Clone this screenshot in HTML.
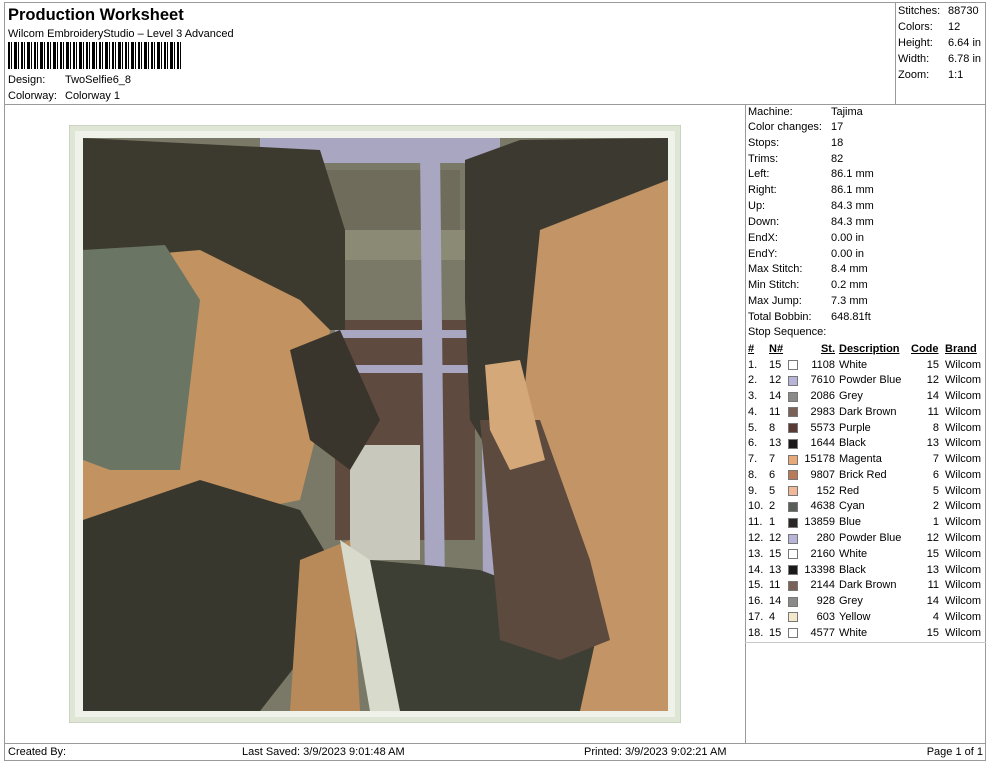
<!DOCTYPE html>
<html><head><meta charset="utf-8"><style>
*{margin:0;padding:0;box-sizing:border-box}
body{width:990px;height:762px;background:#fff;font-family:"Liberation Sans",Arial,sans-serif;font-size:11px;color:#000;position:relative;overflow:hidden}
.a{position:absolute;white-space:nowrap;line-height:13px}
.ln{position:absolute;background:#9a9a9a}
.r{text-align:right}
.sw{position:absolute;width:10px;height:10px;border:1px solid #777}
u{text-decoration:underline;font-weight:bold}
</style></head><body>
<!-- borders -->
<div class="ln" style="left:4px;top:2px;width:982px;height:1px"></div>
<div class="ln" style="left:4px;top:2px;width:1px;height:759px"></div>
<div class="ln" style="left:985px;top:2px;width:1px;height:759px"></div>
<div class="ln" style="left:4px;top:104px;width:982px;height:1px"></div>
<div class="ln" style="left:895px;top:2px;width:1px;height:102px"></div>
<div class="ln" style="left:745px;top:104px;width:1px;height:639px"></div>
<div class="ln" style="left:745px;top:642px;width:241px;height:1px;background:#c8c8c8"></div>
<div class="ln" style="left:4px;top:743px;width:982px;height:1px"></div>
<div class="ln" style="left:4px;top:760px;width:982px;height:1px"></div>

<div class="a" style="left:8px;top:6px;font-size:16.5px;font-weight:bold;line-height:19px">Production Worksheet</div>
<div class="a" style="left:8px;top:28px">Wilcom EmbroideryStudio – Level 3 Advanced</div>
<div class="a" style="left:8px;top:42px;width:175px;height:27px;background:repeating-linear-gradient(90deg,#000 0 2px,#fff 2px 3px,#000 3px 4px,#fff 4px 6px,#000 6px 9px,#fff 9px 10px,#000 10px 11px,#fff 11px 13px)"></div>
<div class="a" style="left:8px;top:74px">Design:</div><div class="a" style="left:65px;top:74px">TwoSelfie6_8</div>
<div class="a" style="left:8px;top:90px">Colorway:</div><div class="a" style="left:65px;top:90px">Colorway 1</div>

<div class="a" style="left:898px;top:5px">Stitches:</div><div class="a" style="left:948px;top:5px">88730</div>
<div class="a" style="left:898px;top:21px">Colors:</div><div class="a" style="left:948px;top:21px">12</div>
<div class="a" style="left:898px;top:37px">Height:</div><div class="a" style="left:948px;top:37px">6.64 in</div>
<div class="a" style="left:898px;top:53px">Width:</div><div class="a" style="left:948px;top:53px">6.78 in</div>
<div class="a" style="left:898px;top:69px">Zoom:</div><div class="a" style="left:948px;top:69px">1:1</div>

<!-- right info -->
<div class="a" style="left:748px;top:106px">Machine:</div><div class="a" style="left:831px;top:106px">Tajima</div>
<div class="a" style="left:748px;top:121px">Color changes:</div><div class="a" style="left:831px;top:121px">17</div>
<div class="a" style="left:748px;top:137px">Stops:</div><div class="a" style="left:831px;top:137px">18</div>
<div class="a" style="left:748px;top:153px">Trims:</div><div class="a" style="left:831px;top:153px">82</div>
<div class="a" style="left:748px;top:168px">Left:</div><div class="a" style="left:831px;top:168px">86.1 mm</div>
<div class="a" style="left:748px;top:184px">Right:</div><div class="a" style="left:831px;top:184px">86.1 mm</div>
<div class="a" style="left:748px;top:200px">Up:</div><div class="a" style="left:831px;top:200px">84.3 mm</div>
<div class="a" style="left:748px;top:216px">Down:</div><div class="a" style="left:831px;top:216px">84.3 mm</div>
<div class="a" style="left:748px;top:232px">EndX:</div><div class="a" style="left:831px;top:232px">0.00 in</div>
<div class="a" style="left:748px;top:248px">EndY:</div><div class="a" style="left:831px;top:248px">0.00 in</div>
<div class="a" style="left:748px;top:263px">Max Stitch:</div><div class="a" style="left:831px;top:263px">8.4 mm</div>
<div class="a" style="left:748px;top:279px">Min Stitch:</div><div class="a" style="left:831px;top:279px">0.2 mm</div>
<div class="a" style="left:748px;top:295px">Max Jump:</div><div class="a" style="left:831px;top:295px">7.3 mm</div>
<div class="a" style="left:748px;top:311px">Total Bobbin:</div><div class="a" style="left:831px;top:311px">648.81ft</div>
<div class="a" style="left:748px;top:326px">Stop Sequence:</div>
<div class="a" style="left:748px;top:343px"><u>#</u></div>
<div class="a" style="left:769px;top:343px"><u>N#</u></div>
<div class="a r" style="left:800px;width:35px;top:343px"><u>St.</u></div>
<div class="a" style="left:839px;top:343px"><u>Description</u></div>
<div class="a" style="left:911px;top:343px"><u>Code</u></div>
<div class="a" style="left:945px;top:343px"><u>Brand</u></div>

<div id="rows"></div>
<script>
var d=[["1.","15","#fff","1108","White","15"],["2.","12","#b8b4d8","7610","Powder Blue","12"],["3.","14","#8a8a88","2086","Grey","14"],["4.","11","#7a6258","2983","Dark Brown","11"],["5.","8","#5a3a34","5573","Purple","8"],["6.","13","#1a1818","1644","Black","13"],["7.","7","#e8a878","15178","Magenta","7"],["8.","6","#b87a58","9807","Brick Red","6"],["9.","5","#f0b898","152","Red","5"],["10.","2","#5a5e58","4638","Cyan","2"],["11.","1","#2a2626","13859","Blue","1"],["12.","12","#b8b4d8","280","Powder Blue","12"],["13.","15","#fff","2160","White","15"],["14.","13","#1a1818","13398","Black","13"],["15.","11","#7a6258","2144","Dark Brown","11"],["16.","14","#8a8a88","928","Grey","14"],["17.","4","#f4e8cc","603","Yellow","4"],["18.","15","#fff","4577","White","15"]];
var h="";d.forEach(function(r,i){var t=(358.5+i*15.77).toFixed(1);
h+='<div class="a" style="left:748px;top:'+t+'px">'+r[0]+'</div><div class="a" style="left:769px;top:'+t+'px">'+r[1]+'</div><div class="sw" style="left:788px;top:'+(+t+1.5)+'px;background:'+r[2]+'"></div><div class="a r" style="left:795px;width:40px;top:'+t+'px">'+r[3]+'</div><div class="a" style="left:839px;top:'+t+'px">'+r[4]+'</div><div class="a r" style="left:910px;width:29px;top:'+t+'px">'+r[5]+'</div><div class="a" style="left:945px;top:'+t+'px">Wilcom</div>';});
document.getElementById("rows").innerHTML=h;
</script>

<!-- footer -->
<div class="a" style="left:8px;top:746px">Created By:</div>
<div class="a" style="left:242px;top:746px">Last Saved: 3/9/2023 9:01:48 AM</div>
<div class="a" style="left:584px;top:746px">Printed: 3/9/2023 9:02:21 AM</div>
<div class="a r" style="left:900px;width:83px;top:746px">Page 1 of 1</div>

<!-- artwork -->
<svg style="position:absolute;left:69px;top:125px" width="612" height="598" viewBox="69 125 612 598">
<rect x="69" y="125" width="612" height="598" fill="#dfe6d6" stroke="#b8c2ae"/>
<rect x="75" y="131" width="600" height="586" fill="#eef2e8"/>
<rect x="83" y="138" width="585" height="573" fill="#7a7866"/>
<rect x="260" y="138" width="240" height="25" fill="#a8a6c0"/>
<rect x="300" y="170" width="160" height="60" fill="#6f6c5c"/>
<rect x="330" y="230" width="140" height="30" fill="#8b8a74"/>
<rect x="335" y="320" width="140" height="220" fill="#5e4a3e"/>
<rect x="335" y="330" width="140" height="8" fill="#a8a6c0"/>
<rect x="335" y="365" width="140" height="8" fill="#a8a6c0"/>
<polygon points="420,150 440,150 445,590 425,590" fill="#a8a6c0"/>
<polygon points="480,140 495,140 498,590 483,590" fill="#a8a6c0"/>
<rect x="350" y="445" width="70" height="115" fill="#c8c8bc"/>
<polygon points="83,138 320,150 345,230 345,330 300,330 200,260 83,260" fill="#3c3a2f"/>
<polygon points="83,260 200,250 300,300 330,330 320,420 300,500 200,520 83,520" fill="#c29260"/>
<polygon points="83,250 165,245 200,300 180,470 110,470 83,460" fill="#6a7663"/>
<polygon points="290,350 340,330 380,420 350,470 310,440" fill="#3a352c"/>
<polygon points="83,520 200,480 300,510 330,560 300,660 260,711 83,711" fill="#38372d"/>
<polygon points="300,560 350,540 360,711 290,711" fill="#b88a5a"/>
<polygon points="340,540 400,580 420,711 370,711" fill="#d8dacc"/>
<polygon points="370,560 480,570 560,600 610,630 600,711 400,711" fill="#3d3e34"/>
<polygon points="465,160 520,140 668,138 668,200 560,230 540,320 530,450 500,470 470,420 465,300" fill="#3c3a30"/>
<polygon points="540,230 668,180 668,711 580,711 600,620 560,500 520,440 530,330" fill="#c39465"/>
<polygon points="480,420 540,420 590,560 610,640 560,660 500,640" fill="#5c4a3f"/>
<polygon points="485,365 520,360 545,460 510,470 490,430" fill="#d4a878"/>
</svg>
</body></html>
